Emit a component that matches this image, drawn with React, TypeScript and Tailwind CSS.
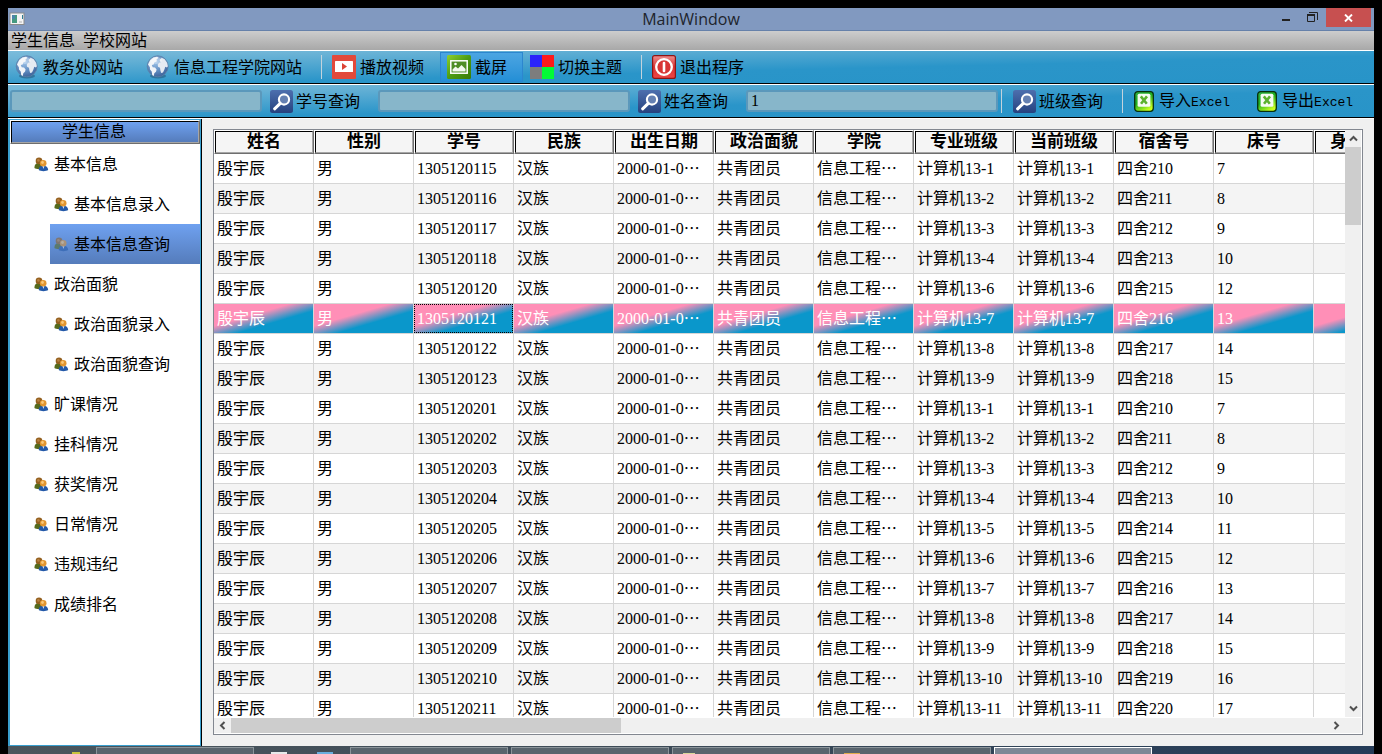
import { useState, type ReactNode } from "react";

function GlobeIcon() {
  return (
    <svg width="24" height="24" viewBox="0 0 24 24" aria-hidden="true" className="shrink-0">
      <defs>
        <radialGradient id="globe" cx="0.4" cy="0.3" r="0.75">
          <stop offset="0" stopColor="#9fc4ea" />
          <stop offset="0.6" stopColor="#5c88bd" />
          <stop offset="1" stopColor="#3b5f96" />
        </radialGradient>
      </defs>
      <ellipse cx="12" cy="21" rx="8" ry="2.4" fill="#24597d" opacity="0.6" />
      <circle cx="11.7" cy="11.3" r="10.5" fill="url(#globe)" stroke="#5d7da6" strokeWidth="0.8" />
      <path d="M2 9.5 4 5.5 7.5 2.6 11 1.8l1.5 1-2 1.6.4 1.8-2.6 1.2-.6 2.2-1.9.3.9 2.3 2.3.4 1.6 1.8-.6 2.4-1.7 1.4-.5 2.8-1.6-1-.5-3.4-1.7-2-.1-2.4z" fill="#f1f4f8" />
      <path d="m13.5 5 2.2-2.3 3 1.5 2.4 3.6.8 3.5-.9 1.3-1.8-.9-.6 2.4-1.6 3.4-1.9.6-.8-3-.3-2.4-2-.9-.3-2.4 1.4-1.7 1.6-.3z" fill="#e6ebf2" />
      <ellipse cx="10" cy="5.6" rx="6" ry="3.4" fill="#fff" opacity="0.3" />
    </svg>
  );
}

function PlayIcon() {
  return (
    <svg width="24" height="24" viewBox="0 0 24 24" aria-hidden="true" className="shrink-0">
      <rect width="24" height="24" rx="1" fill="#e2493b" />
      <rect x="3" y="6" width="18" height="11" rx="0.6" fill="#fff" />
      <path d="m10 8 5 3.5-5 3.5z" fill="#dd4436" />
    </svg>
  );
}

function ScreenshotIcon() {
  return (
    <svg width="24" height="24" viewBox="0 0 24 24" aria-hidden="true" className="shrink-0">
      <defs>
        <linearGradient id="shot" x1="0" y1="0" x2="1" y2="1">
          <stop offset="0" stopColor="#8fd02c" />
          <stop offset="0.5" stopColor="#4c9c14" />
          <stop offset="1" stopColor="#3b7c05" />
        </linearGradient>
      </defs>
      <rect width="24" height="24" rx="1.5" fill="url(#shot)" />
      <rect x="3.8" y="5.8" width="16.4" height="12.4" fill="#4f8d25" stroke="#fff" strokeWidth="1.5" />
      <path d="M5.5 16.5v-2l3-3 2.5 2 3.5-3.5 4 4v2.5z" fill="#f4f9ee" />
      <circle cx="8.5" cy="9" r="1.3" fill="#fff" />
    </svg>
  );
}

function ThemeIcon() {
  return (
    <svg width="24" height="24" viewBox="0 0 24 24" aria-hidden="true" className="shrink-0">
      <path d="M0 0h12v12H0z" fill="#2b23fa" />
      <path d="M12 0h12v12H12z" fill="#fe1a1a" />
      <path d="M0 12h12v12H0z" fill="#7d7d7d" />
      <path d="M12 12h12v12H12z" fill="#02fb36" />
    </svg>
  );
}

function PowerIcon() {
  return (
    <svg width="24" height="24" viewBox="0 0 24 24" aria-hidden="true" className="shrink-0">
      <defs>
        <linearGradient id="power" x1="0" y1="0" x2="0" y2="1">
          <stop offset="0" stopColor="#ee8f8f" />
          <stop offset="0.5" stopColor="#d93434" />
          <stop offset="1" stopColor="#ef4545" />
        </linearGradient>
      </defs>
      <rect x="0.6" y="0.6" width="22.8" height="22.8" rx="2" fill="url(#power)" stroke="#8e1414" strokeWidth="1.2" />
      <circle cx="12" cy="12" r="7.8" fill="#d83636" stroke="#fff" strokeWidth="2.3" />
      <path d="M12 8v8" stroke="#fff" strokeWidth="2.6" strokeLinecap="round" />
    </svg>
  );
}

function SearchIcon() {
  return (
    <svg width="23" height="23" viewBox="0 0 23 23" aria-hidden="true" className="shrink-0">
      <defs>
        <linearGradient id="search" x1="0" y1="0" x2="0" y2="1">
          <stop offset="0" stopColor="#4d6fae" />
          <stop offset="1" stopColor="#26427f" />
        </linearGradient>
      </defs>
      <rect width="23" height="23" rx="2.5" fill="url(#search)" />
      <circle cx="14" cy="9.5" r="5.1" fill="#6580b2" stroke="#fff" strokeWidth="2.1" />
      <path d="m10 13.6-5.4 5.2" stroke="#fff" strokeWidth="3" strokeLinecap="round" />
    </svg>
  );
}

function ExcelIcon() {
  return (
    <svg width="20" height="21" viewBox="0 0 20 21" aria-hidden="true" className="shrink-0">
      <defs>
        <linearGradient id="excel" x1="0" y1="0" x2="0.6" y2="1">
          <stop offset="0" stopColor="#2fae45" />
          <stop offset="0.5" stopColor="#1fb01f" />
          <stop offset="1" stopColor="#c8ff20" />
        </linearGradient>
      </defs>
      <rect x="0.7" y="0.7" width="18.6" height="19.6" rx="3" fill="url(#excel)" stroke="#06300c" strokeWidth="1.3" />
      <rect x="3.6" y="2.8" width="12.8" height="13" rx="1.5" fill="#f6fbf2" />
      <path d="m6.8 5.4 6 7.4M13 5.4l-6 7.4" stroke="#5bb12d" strokeWidth="2.6" />
    </svg>
  );
}

function UsersIcon({ dim }: { dim: boolean }) {
  return (
    <svg width="15" height="15" viewBox="0 0 15 15" aria-hidden="true" className={dim ? "shrink-0 opacity-55" : "shrink-0"}>
      <path d="M0.4 11c0-3.4 1.6-5 4.2-5s4 1.6 4 5c-2 1.4-6.2 1.4-8.2 0z" fill="#566b1d" />
      <circle cx="5" cy="3.9" r="3.3" fill="#94601f" />
      <circle cx="4.4" cy="3.4" r="1.3" fill="#b98243" />
      <path d="M4.7 13.1c0-3 1.7-4.3 4.6-4.3 2.8 0 4.9 1.4 4.9 4.3-2 1.5-7.5 1.5-9.5 0z" fill="#2459a8" />
      <path d="m8.4 9 1 3 1-3z" fill="#dfe8f4" />
      <circle cx="9.2" cy="6.3" r="3.3" fill="#e3952f" />
      <circle cx="8.5" cy="5.5" r="1.4" fill="#f9c878" />
    </svg>
  );
}

function Chevron({ d }: { d: string }) {
  return (
    <svg width="9" height="9" viewBox="0 0 9 9" aria-hidden="true">
      <path d={d} fill="none" stroke="#505050" strokeWidth="2" />
    </svg>
  );
}

function ToolButton({ icon, children, active = false }: { icon: ReactNode; children: ReactNode; active?: boolean }) {
  return (
    <button
      className={
        active
          ? "flex h-[30px] items-center gap-1 border border-[#2c86cf] bg-linear-to-b from-[#4ba5e2] to-[#238fd6] pr-[15px] pl-[6px] whitespace-nowrap"
          : "flex h-[30px] items-center gap-1 pr-4 pl-[7px] whitespace-nowrap"
      }
    >
      {icon}
      <span className="pt-[2px]">{children}</span>
    </button>
  );
}

function Separator() {
  return <span className="mx-[3px] h-6 w-px shrink-0 bg-[#c3d3dc]" />;
}

const barClass =
  "flex h-8 shrink-0 items-center bg-[linear-gradient(to_bottom_right,#7bbcdb_0%,#6fb5d7_12%,#2a95c9_58%,#2894c8_100%)]";

function SearchField({ label, value = "" }: { label: string; value?: string }) {
  return (
    <input
      aria-label={label}
      defaultValue={value}
      className="h-[22px] w-[252px] min-w-0 rounded-[3px] border-2 border-[#5b98bb] bg-[#87b6ca] px-[3px] outline-none"
    />
  );
}

function SearchButton({ children }: { children: ReactNode }) {
  return (
    <button className="flex shrink-0 items-center gap-[3px] whitespace-nowrap">
      <SearchIcon />
      <span className="pt-[2px]">{children}</span>
    </button>
  );
}

function ExcelButton({ children }: { children: ReactNode }) {
  return (
    <button className="flex shrink-0 items-center gap-[5px] whitespace-nowrap">
      <ExcelIcon />
      <span className="flex items-baseline pt-[2px]">
        {children}
        <span className="font-['Liberation_Mono',monospace] text-[13px]">Excel</span>
      </span>
    </button>
  );
}

const navItems = [
  { label: "基本信息", level: 1 },
  { label: "基本信息录入", level: 2 },
  { label: "基本信息查询", level: 2 },
  { label: "政治面貌", level: 1 },
  { label: "政治面貌录入", level: 2 },
  { label: "政治面貌查询", level: 2 },
  { label: "旷课情况", level: 1 },
  { label: "挂科情况", level: 1 },
  { label: "获奖情况", level: 1 },
  { label: "日常情况", level: 1 },
  { label: "违规违纪", level: 1 },
  { label: "成绩排名", level: 1 },
];

function Sidebar() {
  const [current, setCurrent] = useState("基本信息查询");
  return (
    <aside className="flex w-[194px] shrink-0 flex-col border-r border-black bg-[#3aa0cf] pt-px pr-px pb-px pl-[2px]">
      <div className="flex min-h-0 flex-1 flex-col bg-white">
        <div className="h-6 shrink-0 border border-t-white border-r-[#6e6e6e] border-b-[#6e6e6e] border-l-white">
          <h2 className="flex h-[22px] items-center justify-center border border-t-black border-r-[#a6a6a6] border-b-[#a6a6a6] border-l-black bg-linear-to-b from-[#6fa1f0] to-[#557cbb] pr-[22px]">
            学生信息
          </h2>
        </div>
        <nav>
          <ul>
            {navItems.map(({ label, level }) => (
              <li key={label} className={level === 1 ? "pl-5" : "pl-10"}>
                <button
                  onClick={() => setCurrent(label)}
                  className={
                    label === current
                      ? "flex h-10 w-full items-center gap-[5px] bg-linear-to-b from-[#6fa1f0] to-[#557cbb] pl-1"
                      : "flex h-10 w-full items-center gap-[5px] pl-1"
                  }
                >
                  <UsersIcon dim={label === current} />
                  <span className="pt-[2px]">{label}</span>
                </button>
              </li>
            ))}
          </ul>
        </nav>
      </div>
    </aside>
  );
}

const headers = ["姓名", "性别", "学号", "民族", "出生日期", "政治面貌", "学院", "专业班级", "当前班级", "宿舍号", "床号", "身份证号"];

const students = [
  ["1305120115", 1],
  ["1305120116", 2],
  ["1305120117", 3],
  ["1305120118", 4],
  ["1305120120", 6],
  ["1305120121", 7],
  ["1305120122", 8],
  ["1305120123", 9],
  ["1305120201", 1],
  ["1305120202", 2],
  ["1305120203", 3],
  ["1305120204", 4],
  ["1305120205", 5],
  ["1305120206", 6],
  ["1305120207", 7],
  ["1305120208", 8],
  ["1305120209", 9],
  ["1305120210", 10],
  ["1305120211", 11],
] as const;

function StudentTable() {
  const [selected, setSelected] = useState("1305120121");
  return (
    <table className="w-[1200px] table-fixed border-separate border-spacing-0">
      <thead>
        <tr>
          {headers.map((h) => (
            <th key={h} className="h-6 border-t border-r border-b border-l border-t-white border-r-[#6e6e6e] border-b-[#6e6e6e] border-l-white p-0 text-[17px] leading-5 font-bold">
              <div className="h-[22px] border border-t-black border-r-[#a6a6a6] border-b-[#a6a6a6] border-l-black bg-[#f5f5f5]">{h}</div>
            </th>
          ))}
        </tr>
      </thead>
      <tbody>
        {students.map(([id, n]) => {
          const isSelected = id === selected;
          const cells = ["殷宇辰", "男", id, "汉族", "2000-01-0⋯", "共青团员", "信息工程⋯", `计算机13-${n}`, `计算机13-${n}`, `四舍${209 + n}`, `${6 + n}`, ""];
          return (
            <tr key={id} onClick={() => setSelected(id)} className={isSelected ? "text-white" : "odd:bg-white even:bg-[#f4f4f4]"}>
              {cells.map((c, i) => (
                <td
                  key={headers[i]}
                  className={
                    isSelected
                      ? "relative h-[30px] border-r border-b border-[#d6d6d6] bg-[linear-gradient(to_bottom_right,#ff8fb7_0%,#ff8fb7_38%,#0a97cb_62%,#0a97cb_100%)] py-0 pr-0 pl-[3px] leading-5 whitespace-nowrap"
                      : "h-[30px] border-r border-b border-[#d6d6d6] py-0 pr-0 pl-[3px] leading-5 whitespace-nowrap"
                  }
                >
                  {c}
                  {isSelected && i === 2 && <span className="absolute inset-0 border border-dotted border-black" />}
                </td>
              ))}
            </tr>
          );
        })}
      </tbody>
    </table>
  );
}

function TablePanel() {
  return (
    <main className="flex min-h-0 min-w-0 flex-1 bg-[#f0f0f0] px-[11px] pt-[10px] pb-[11px]">
      <div className="flex min-w-0 flex-1 flex-col border border-[#828790] bg-white pr-px pb-px">
        <div className="flex min-h-0 flex-1">
          <div className="min-w-0 flex-1 overflow-hidden">
            <StudentTable />
          </div>
          <div className="flex w-4 flex-col items-center bg-[#f0f0f0]">
            <button aria-label="向上滚动" className="flex h-[17px] w-full shrink-0 items-center justify-center">
              <Chevron d="M1 6.5 4.5 3 8 6.5" />
            </button>
            <div className="h-[78px] w-full bg-[#cdcdcd]" />
            <button aria-label="向下滚动" className="mt-auto flex h-[17px] w-full shrink-0 items-center justify-center">
              <Chevron d="M1 2.5 4.5 6 8 2.5" />
            </button>
          </div>
        </div>
        <div className="flex h-4 shrink-0 items-center border-t border-white bg-[#f0f0f0]">
          <button aria-label="向左滚动" className="flex h-full w-[17px] shrink-0 items-center justify-center">
            <Chevron d="M6.5 1 3 4.5 6.5 8" />
          </button>
          <div className="h-full w-[34%] bg-[#cdcdcd]" />
          <button aria-label="向右滚动" className="mr-4 ml-auto flex h-full w-[17px] items-center justify-center">
            <Chevron d="M2.5 1 6 4.5 2.5 8" />
          </button>
        </div>
      </div>
    </main>
  );
}

function TitleBar() {
  return (
    <header className="grid h-[23px] shrink-0 grid-cols-[1fr_auto_1fr] items-start border-b border-[#6681aa] bg-[#8199c0]">
      <svg width="17" height="14" viewBox="0 0 17 14" aria-hidden="true" className="mt-1 ml-px">
        <rect x="1" y="1" width="14" height="11.5" fill="#f4f4f4" stroke="#8b8b8b" />
        <rect x="3" y="3" width="5" height="8" fill="#459a80" />
        <path d="M3 3h3v4H3z" fill="#4c86a8" />
        <path d="M13 3h1v4h-1z" fill="#2f7d93" />
        <path d="M10 9h3v2h-3z" fill="#d2d2d2" />
      </svg>
      <h1 className="font-['Open_Sans',sans-serif] text-[16px] leading-[22px] text-[#20242c]">MainWindow</h1>
      <div className="mr-[3px] flex justify-end">
        <button aria-label="最小化" className="flex h-[19px] w-[26px] items-center justify-center">
          <svg width="10" height="10" viewBox="0 0 10 10" aria-hidden="true">
            <path d="M1 6h8v2H1z" fill="#222" />
          </svg>
        </button>
        <button aria-label="还原" className="mr-px flex h-[19px] w-[26px] items-center justify-center">
          <svg width="11" height="11" viewBox="0 0 11 11" aria-hidden="true">
            <path d="M2 0.5h8.5V8M0.5 3v6.5h7V3" fill="none" stroke="#222" />
            <path d="M0 2h8v2H0z" fill="#222" />
          </svg>
        </button>
        <button aria-label="关闭" className="flex h-[19px] w-[45px] items-center justify-center bg-[#c75050]">
          <svg width="9" height="8" viewBox="0 0 9 8" aria-hidden="true">
            <path d="m1 0.5 7 7M8 0.5l-7 7" stroke="#fff" strokeWidth="1.9" />
          </svg>
        </button>
      </div>
    </header>
  );
}

function TaskTab({ active = false, mark }: { active?: boolean; mark?: string }) {
  return (
    <div
      className={
        active
          ? "h-full w-[158px] border border-b-0 border-white bg-[#7e8896] pt-[5px] pl-3"
          : "h-full w-[158px] border border-b-0 border-[#8b949a] bg-[#59646d] pt-[5px] pl-[10px]"
      }
    >
      {mark && <div className={mark} />}
    </div>
  );
}

function Taskbar() {
  return (
    <footer className="flex h-2 shrink-0 bg-linear-to-r from-[#4b565d] via-[#3b4956] to-[#243b58] pt-px">
      <div className="w-[88px] pt-[5px] pl-16">
        <div className="h-[2px] w-2 bg-[#c9c23c]" />
      </div>
      <TaskTab />
      <div className="flex w-24 gap-[30px] pt-[5px] pl-[17px]">
        <div className="h-[2px] w-4 bg-[#e6e9ea]" />
        <div className="h-[2px] w-4 bg-[#68aede]" />
      </div>
      <div className="flex gap-[3px]">
        <TaskTab />
        <TaskTab />
        <TaskTab mark="h-[2px] w-3 bg-[#d9d79a]" />
        <TaskTab mark="h-[2px] w-4 bg-[#e0ac4c]" />
        <TaskTab active />
      </div>
    </footer>
  );
}

export default function App() {
  return (
    <div lang="zh-CN" className="flex h-screen flex-col overflow-hidden bg-black px-2 pt-2 font-['Liberation_Serif','Noto_Sans_CJK_SC',serif] text-[16px] leading-5 text-black">
      <TitleBar />
      <nav className="flex h-5 shrink-0 items-center gap-2 border-b border-white bg-linear-to-b from-[#cdcdcd] to-[#a8a8a8] pl-[3px]">
        <button>学生信息</button>
        <button>学校网站</button>
      </nav>
      <div className={barClass}>
        <ToolButton icon={<GlobeIcon />}>教务处网站</ToolButton>
        <ToolButton icon={<GlobeIcon />}>信息工程学院网站</ToolButton>
        <Separator />
        <ToolButton icon={<PlayIcon />}>播放视频</ToolButton>
        <ToolButton icon={<ScreenshotIcon />} active>截屏</ToolButton>
        <ToolButton icon={<ThemeIcon />}>切换主题</ToolButton>
        <Separator />
        <ToolButton icon={<PowerIcon />}>退出程序</ToolButton>
      </div>
      <div className="h-[2px] shrink-0 border-t border-black bg-white" />
      <div className={barClass}>
        <div className="flex min-w-0 items-center gap-[18px] pl-[2px]">
          <div className="flex min-w-0 items-center gap-2">
            <SearchField label="学号" />
            <SearchButton>学号查询</SearchButton>
          </div>
          <div className="flex min-w-0 items-center gap-2">
            <SearchField label="姓名" />
            <SearchButton>姓名查询</SearchButton>
          </div>
          <div className="flex min-w-0 items-center">
            <SearchField label="班级" value="1" />
            <Separator />
            <div className="pl-2">
              <SearchButton>班级查询</SearchButton>
            </div>
          </div>
        </div>
        <div className="flex items-center pl-4">
          <Separator />
          <div className="flex gap-[27px] pl-2">
            <ExcelButton>导入</ExcelButton>
            <ExcelButton>导出</ExcelButton>
          </div>
        </div>
      </div>
      <div className="h-[2px] shrink-0 border-t border-black bg-white" />
      <div className="flex min-h-0 flex-1">
        <Sidebar />
        <TablePanel />
      </div>
      <Taskbar />
    </div>
  );
}
